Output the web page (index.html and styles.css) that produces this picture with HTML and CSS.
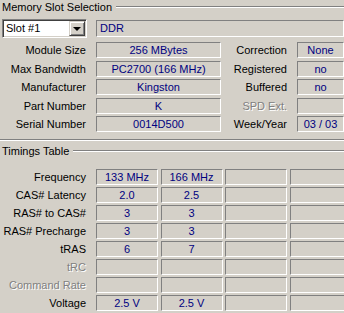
FILE: index.html
```html
<!DOCTYPE html>
<html lang="en">
<head>
    <meta charset="UTF-8">
    <title>Memory</title>
    <link rel="stylesheet" href="styles.css">
</head>
<body>
    <div class="window">
        <div class="group-title"><span>Memory Slot Selection</span></div>

        <div class="slot-row">
            <div class="combo">
                <span class="combo-text">Slot #1</span>
                <span class="combo-btn"><span class="arrow"></span></span>
            </div>
            <div class="field field-left field-type">DDR</div>
        </div>

        <div class="spd-grid">
            <div class="label">Module Size</div>
            <div class="field">256 MBytes</div>
            <div class="label">Correction</div>
            <div class="field">None</div>

            <div class="label">Max Bandwidth</div>
            <div class="field">PC2700 (166 MHz)</div>
            <div class="label">Registered</div>
            <div class="field">no</div>

            <div class="label">Manufacturer</div>
            <div class="field">Kingston</div>
            <div class="label">Buffered</div>
            <div class="field">no</div>

            <div class="label">Part Number</div>
            <div class="field">K</div>
            <div class="label disabled">SPD Ext.</div>
            <div class="field"></div>

            <div class="label">Serial Number</div>
            <div class="field">0014D500</div>
            <div class="label">Week/Year</div>
            <div class="field">03 / 03</div>
        </div>

        <div class="groove"></div>

        <div class="group-title timings-title"><span>Timings Table</span></div>

        <div class="timings-grid">
            <div class="label">Frequency</div>
            <div class="field">133 MHz</div>
            <div class="field">166 MHz</div>
            <div class="field"></div>
            <div class="field"></div>

            <div class="label">CAS# Latency</div>
            <div class="field">2.0</div>
            <div class="field">2.5</div>
            <div class="field"></div>
            <div class="field"></div>

            <div class="label">RAS# to CAS#</div>
            <div class="field">3</div>
            <div class="field">3</div>
            <div class="field"></div>
            <div class="field"></div>

            <div class="label">RAS# Precharge</div>
            <div class="field">3</div>
            <div class="field">3</div>
            <div class="field"></div>
            <div class="field"></div>

            <div class="label">tRAS</div>
            <div class="field">6</div>
            <div class="field">7</div>
            <div class="field"></div>
            <div class="field"></div>

            <div class="label disabled">tRC</div>
            <div class="field"></div>
            <div class="field"></div>
            <div class="field"></div>
            <div class="field"></div>

            <div class="label disabled">Command Rate</div>
            <div class="field"></div>
            <div class="field"></div>
            <div class="field"></div>
            <div class="field"></div>

            <div class="label">Voltage</div>
            <div class="field">2.5 V</div>
            <div class="field">2.5 V</div>
            <div class="field"></div>
            <div class="field"></div>
        </div>
    </div>
</body>
</html>
```

FILE: styles.css
```css
body {
    margin: 0;
    background-color: #d4d0c8;
    font-family: "Liberation Sans", Arial, sans-serif;
    font-size: 11px;
    color: #000;
}
.window {
    width: 344px;
    height: 313px;
    overflow: hidden;
}
.group-title {
    display: flex;
    align-items: center;
    height: 13px;
    padding-left: 2px;
    white-space: nowrap;
}
.group-title::after {
    content: "";
    flex: 1;
    margin-left: 4px;
    border-top: 1px solid #808080;
    border-bottom: 1px solid #fff;
}
.slot-row {
    display: flex;
    margin-top: 6px;
}
.combo {
    display: flex;
    width: 85px;
    height: 19px;
    margin-left: 2px;
    box-sizing: border-box;
    background-color: #fff;
    border-top: 1px solid #808080;
    border-left: 1px solid #808080;
    border-bottom: 1px solid #fff;
    border-right: 1px solid #fff;
    box-shadow: inset 1px 1px 0 #404040, inset -1px -1px 0 #d4d0c8;
    padding: 1px;
}
.combo-text {
    flex: 1;
    padding-left: 2px;
    line-height: 15px;
}
.combo-btn {
    display: flex;
    align-items: center;
    justify-content: center;
    width: 16px;
    box-sizing: border-box;
    background-color: #d4d0c8;
    border-top: 1px solid #d4d0c8;
    border-left: 1px solid #d4d0c8;
    border-bottom: 1px solid #404040;
    border-right: 1px solid #404040;
    box-shadow: inset 1px 1px 0 #fff, inset -1px -1px 0 #808080;
}
.arrow {
    width: 0;
    height: 0;
    border-left: 4px solid transparent;
    border-right: 4px solid transparent;
    border-top: 4px solid #000;
}
.field {
    box-sizing: border-box;
    height: 16px;
    line-height: 14px;
    text-align: center;
    color: #000080;
    border-top: 1px solid #808080;
    border-left: 1px solid #808080;
    border-bottom: 1px solid #fff;
    border-right: 1px solid #fff;
    white-space: nowrap;
    overflow: hidden;
}
.field-left {
    text-align: left;
    padding-left: 3px;
}
.field-type {
    flex: 1;
    height: 17px;
    line-height: 15px;
    margin-top: 1px;
    margin-left: 9px;
}
.label {
    text-align: right;
    padding-right: 10px;
    line-height: 16px;
    white-space: nowrap;
}
.disabled {
    color: #808080;
    text-shadow: 1px 1px 0 #fff;
}
.spd-grid {
    display: grid;
    grid-template-columns: 96px 125px 76px 47px;
    grid-auto-rows: 16px;
    row-gap: 2.5px;
    margin-top: 4px;
}
.groove {
    margin-top: 7px;
    border-top: 1px solid #808080;
    border-bottom: 1px solid #fff;
}
.timings-title {
    margin-top: 3px;
}
.timings-grid {
    display: grid;
    grid-template-columns: 93.5px repeat(4, 62px);
    grid-auto-rows: 16px;
    column-gap: 2.5px;
    row-gap: 2px;
    margin-top: 12px;
}
.timings-grid .label {
    padding-right: 7.5px;
}
```
